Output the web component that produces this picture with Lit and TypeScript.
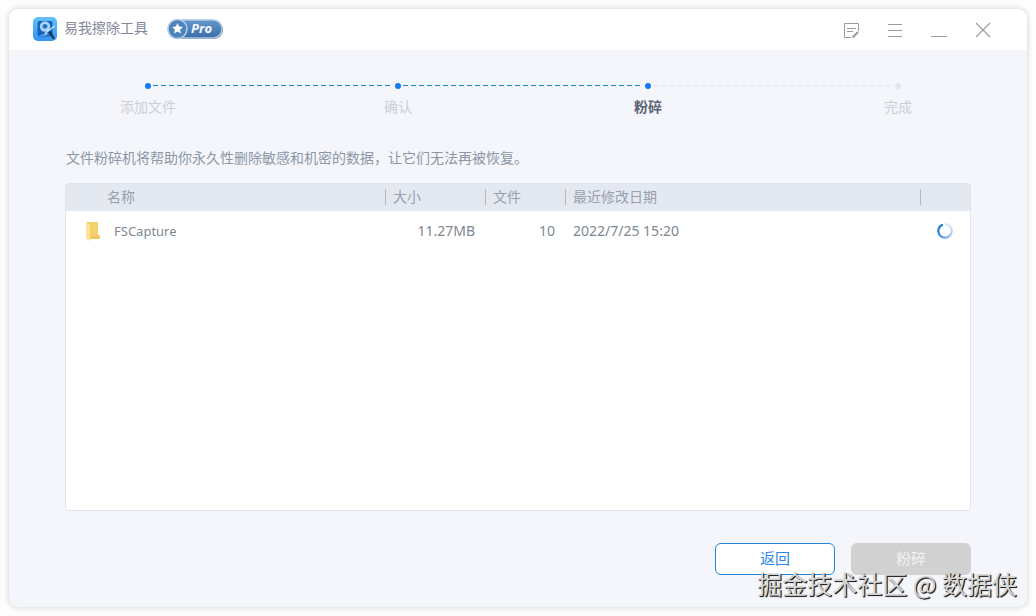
import { LitElement, html, css, svg } from "lit";
import { customElement, state } from "lit/decorators.js";
import { classMap } from "lit/directives/class-map.js";

interface Step {
  label: string;
  status: "done" | "current" | "todo";
}

@customElement("title-bar")
export class TitleBar extends LitElement {
  static styles = css`
    :host {
      display: block;
    }
    .bar {
      display: flex;
      align-items: center;
      height: 41px;
      padding: 0 32px 0 24px;
      background: #fff;
      border-radius: 9px 9px 0 0;
    }
    .brand {
      display: flex;
      align-items: center;
      height: 40px;
      align-self: flex-start;
    }
    .logo {
      width: 24px;
      height: 24px;
    }
    .name {
      margin: 0 19px 0 7px;
      padding-bottom: 2px;
      font-size: 14px;
      font-weight: 400;
      line-height: 20px;
      color: #85889c;
    }
    .badge {
      flex: none;
      width: 56px;
      height: 22px;
    }
    .controls {
      display: flex;
      gap: 20px;
      margin-left: auto;
    }
    button {
      display: block;
      width: 24px;
      height: 24px;
      padding: 0;
      border: 0;
      background: none;
      color: #999b9e;
    }
    button svg {
      display: block;
      width: 24px;
      height: 24px;
      fill: none;
      stroke: currentColor;
    }
  `;

  private control(label: string, shape: unknown) {
    return html`<button type="button" aria-label=${label}><svg viewBox="0 0 24 24">${shape}</svg></button>`;
  }

  render() {
    return html`
      <header class="bar">
        <div class="brand">
          <svg class="logo" viewBox="0 0 24 24" aria-hidden="true">
            <defs>
              <linearGradient id="tile" x1="0" y1="0" x2="0" y2="1">
                <stop offset="0" stop-color="#62c3fb" />
                <stop offset="1" stop-color="#3493ee" />
              </linearGradient>
            </defs>
            <rect width="24" height="24" rx="5" fill="url(#tile)" />
            <rect x="4.500" y="4" width="15" height="15.500" rx="2" fill="#1663bd" />
            <circle cx="12" cy="9.500" r="5.200" fill="#a9d4f8" />
            <circle cx="12" cy="9.300" r="2.400" fill="#2472c6" />
            <path d="M6 18.500c3-.3 5-1.500 7-3l3 1.500c-3 1.800-6 2.300-10 1.500z" fill="#6fb4f2" />
            <path d="M12 16.500L21.500 9" stroke="#d4eafc" stroke-width="1.200" />
            <path d="M17 15.500l3.500 5.500" stroke="#1c3048" stroke-width="2.200" stroke-linecap="round" />
          </svg>
          <h1 class="name">易我擦除工具</h1>
          <svg class="badge" viewBox="0 0 56 22" role="img" aria-label="Pro">
            <defs>
              <linearGradient id="pill" x1="0" y1="0" x2="0" y2="1">
                <stop offset="0" stop-color="#6596c9" />
                <stop offset="1" stop-color="#396ea9" />
              </linearGradient>
            </defs>
            <rect x="1" y="3" width="55" height="18" rx="9" fill="#6c7d93" />
            <rect x="1" y="2" width="54" height="18" rx="9" fill="url(#pill)" stroke="#a9c6e4" stroke-width="1.500" />
            <circle cx="10.500" cy="11" r="9.500" fill="#4d82ba" stroke="#b4cee9" stroke-width="1.500" />
            <path d="M10.500 5l1.600 3.600 3.900.4-2.900 2.600.8 3.900-3.400-2-3.400 2 .8-3.900L5 9l3.900-.4z" fill="#fff" />
            <text x="24" y="15" font-family="Open Sans, Noto Sans, sans-serif" font-size="13" font-style="italic" font-weight="700" fill="#f4f9ff">Pro</text>
          </svg>
        </div>
        <nav class="controls">
          ${this.control(
            "反馈",
            svg`<path d="M19.500 13V5.500h-14v14H12M8 10.500h9M8 13.500h6" /><path d="M13.500 19.500l5.500-5.500" stroke-width="2.200" />`
          )}
          ${this.control("菜单", svg`<path d="M5 6.500h14M5 12.500h14M5 18.500h14" />`)}
          ${this.control("最小化", svg`<path d="M4 18.500h16" />`)}
          ${this.control("关闭", svg`<path d="M5 5l14 14M19 5l-14 14" stroke-width="1.100" />`)}
        </nav>
      </header>
    `;
  }
}

@customElement("step-track")
export class StepTrack extends LitElement {
  static properties = { steps: { attribute: false } };
  declare steps: Step[];

  static styles = css`
    :host {
      display: block;
    }
    ol {
      display: grid;
      grid-template-columns: repeat(4, 1fr);
      margin: 0;
      padding: 0;
      list-style: none;
    }
    li {
      display: grid;
      justify-items: center;
      align-items: center;
      grid-template-rows: 6px 20px;
      row-gap: 8px;
      color: #cccfd6;
    }
    .dot,
    .line {
      grid-area: 1 / 1;
    }
    .dot {
      width: 6px;
      height: 6px;
      border-radius: 50%;
      background: #1479f0;
    }
    .line {
      justify-self: stretch;
      align-self: start;
      height: 1px;
      margin: 2px calc(6px - 50%) 0 calc(50% + 5px);
      background: repeating-linear-gradient(90deg, #1684c8 0 5px, transparent 5px 8px);
    }
    .faint {
      background: repeating-linear-gradient(90deg, #e3e6ec 0 5px, transparent 5px 8px);
    }
    .todo .dot {
      background: #e2e5ea;
    }
    .label {
      font-size: 14px;
      line-height: 20px;
    }
    .current .label {
      font-weight: 700;
      color: #5c6376;
    }
  `;

  render() {
    return html`<ol>
      ${this.steps.map(
        (step, i) => html`<li
          class=${classMap({ [step.status]: true })}
          aria-current=${step.status === "current" ? "step" : "false"}
        >
          <span class="dot"></span>
          ${i < this.steps.length - 1
            ? html`<span class=${classMap({ line: true, faint: step.status !== "done" })}></span>`
            : ""}
          <span class="label">${step.label}</span>
        </li>`
      )}
    </ol>`;
  }
}

@customElement("file-table")
export class FileTable extends LitElement {
  static styles = css`
    :host {
      display: block;
      box-sizing: border-box;
      border: 1px solid #e1e5eb;
      border-radius: 3px;
      background: #fff;
      overflow: hidden;
    }
    table {
      width: 100%;
      table-layout: fixed;
      border-collapse: collapse;
      font-size: 14px;
      line-height: 20px;
      color: #7e8791;
    }
    .size {
      width: 100px;
    }
    .count {
      width: 80px;
    }
    .date {
      width: 355px;
    }
    .state {
      width: 50px;
    }
    th {
      height: 27px;
      padding: 0;
      background: #e4e9f1;
      font-weight: 400;
      text-align: left;
      vertical-align: top;
      color: #999fab;
    }
    th span {
      display: block;
      height: 16px;
      margin-top: 5px;
      padding-left: 7px;
      border-left: 1px solid #b3b8c3;
      line-height: 16px;
    }
    th:first-child span {
      padding-left: 41px;
      border-left: 0;
    }
    td {
      height: 40px;
      padding: 0 10px 0 8px;
      font-family: "Noto Sans", "Noto Sans CJK SC", sans-serif;
    }
    .number {
      text-align: right;
    }
    .file {
      display: flex;
      align-items: center;
      gap: 13px;
      padding-left: 12px;
      font-size: 13px;
    }
    .folder {
      width: 15px;
      height: 20px;
    }
    .spinner {
      display: block;
      width: 16px;
      height: 16px;
      margin-left: 9px;
      border-radius: 50%;
      background: conic-gradient(#d9ebfb 0 25deg, #c5d3f8 90deg, #7fa8ee 180deg, #2f82dc 260deg, #1f7fd8 340deg, transparent 340deg);
      mask: radial-gradient(circle, transparent 5px, #000 6px);
    }
  `;

  render() {
    return html`<table>
      <colgroup>
        <col />
        <col class="size" />
        <col class="count" />
        <col class="date" />
        <col class="state" />
      </colgroup>
      <thead>
        <tr>
          <th scope="col"><span>名称</span></th>
          <th scope="col"><span>大小</span></th>
          <th scope="col"><span>文件</span></th>
          <th scope="col"><span>最近修改日期</span></th>
          <th scope="col" aria-label="状态"><span></span></th>
        </tr>
      </thead>
      <tbody>
        <tr>
          <td>
            <div class="file">
              <svg class="folder" viewBox="0 0 15 20" aria-hidden="true">
                <path d="M0 1h12v13l2 1v3H4z" fill="#f3d06c" />
                <path d="M0 1l4 2v17l-4-2z" fill="#fbe49a" />
                <path d="M4 17l8-3 2 1v3H4z" fill="#efc95f" />
              </svg>
              FSCapture
            </div>
          </td>
          <td class="number">11.27MB</td>
          <td class="number">10</td>
          <td>2022/7/25 15:20</td>
          <td><span class="spinner" role="progressbar" aria-label="粉碎中"></span></td>
        </tr>
      </tbody>
    </table>`;
  }
}

@customElement("app-root")
export class AppRoot extends LitElement {
  @state() private steps: Step[] = [
    { label: "添加文件", status: "done" },
    { label: "确认", status: "done" },
    { label: "粉碎", status: "current" },
    { label: "完成", status: "todo" },
  ];

  static styles = css`
    :host {
      display: block;
      position: relative;
      box-sizing: border-box;
      min-height: 100vh;
      padding: 9px;
      background: #fcfdfc;
      font-family: "Liberation Sans", "Noto Sans CJK SC", sans-serif;
    }
    .window {
      display: flex;
      flex-direction: column;
      min-height: calc(100vh - 18px);
      border-radius: 9px;
      background: #f4f6fb;
      box-shadow: 0 0 5px 1px #d9dbdb;
    }
    .steps {
      margin: 33px 4px 0 14px;
    }
    .hint {
      margin: 31px 56px 15px 57px;
      font-size: 14px;
      line-height: 20px;
      color: #8e96a5;
    }
    .files {
      flex: 1;
      margin: 0 56px;
    }
    .actions {
      display: flex;
      justify-content: flex-end;
      gap: 16px;
      padding: 32px 56px;
    }
    .action {
      box-sizing: border-box;
      width: 120px;
      height: 32px;
      padding: 0;
      border: 1px solid #1f86dc;
      border-radius: 6px;
      background: #fff;
      font: inherit;
      font-size: 15px;
      line-height: 20px;
      color: #2c85e8;
    }
    .action:disabled {
      border-color: #d1d1d2;
      background: #d1d1d2;
      color: #f2f3f5;
    }
    .watermark {
      position: absolute;
      right: 19px;
      bottom: 15px;
      font-family: "Noto Sans CJK SC", sans-serif;
      font-size: 25px;
      line-height: 36px;
      color: #d6d6d6;
      text-shadow: 1px 1px 0 #222, 1px 1px 1px #444;
      white-space: nowrap;
      pointer-events: none;
    }
  `;

  render() {
    return html`
      <main class="window">
        <title-bar></title-bar>
        <step-track class="steps" .steps=${this.steps}></step-track>
        <p class="hint">文件粉碎机将帮助你永久性删除敏感和机密的数据，让它们无法再被恢复。</p>
        <file-table class="files"></file-table>
        <div class="actions">
          <button class="action" type="button">返回</button>
          <button class="action" type="button" disabled>粉碎</button>
        </div>
      </main>
      <div class="watermark">掘金技术社区 @ 数据侠</div>
    `;
  }
}
